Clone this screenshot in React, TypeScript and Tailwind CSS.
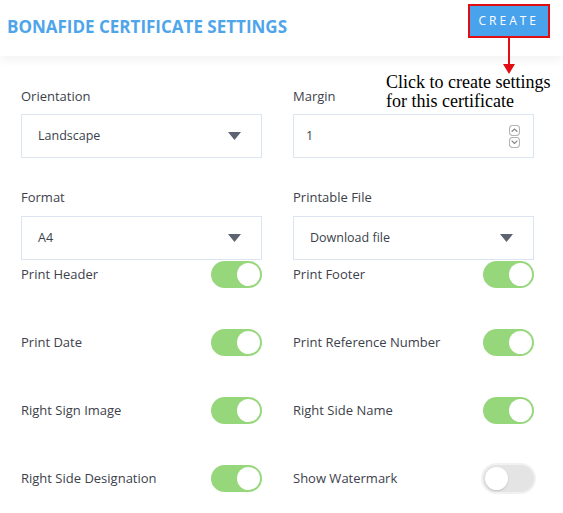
import { useState } from "react"

const font = { fontFamily: '"Open Sans", "Liberation Sans", sans-serif' }

function Caret() {
  return (
    <svg width="13" height="8" viewBox="0 0 13 8" className="text-[#5d6370]">
      <path d="M0 0h13L6.5 8z" fill="currentColor" />
    </svg>
  )
}

function Spinner() {
  return (
    <div className="flex flex-col gap-[1px]">
      {["M3 6.5l2.5-2.5 2.5 2.5", "M3 4l2.5 2.5 2.5-2.5"].map((d) => (
        <svg key={d} width="11" height="11" viewBox="0 0 11 11" fill="none" stroke="#8a8a8a" strokeWidth="1.1">
          <rect x="0.5" y="0.5" width="10" height="10" rx="3" stroke="#b5b5b5" />
          <path d={d} strokeLinecap="round" strokeLinejoin="round" />
        </svg>
      ))}
    </div>
  )
}

function SelectBox({ value }: { value: string }) {
  return (
    <div className="h-[44px] border border-[#dce4f2] flex items-center justify-between pl-4 pr-5 text-[12.5px] text-[#3a3f4b]">
      <span>{value}</span>
      <Caret />
    </div>
  )
}

function Switch({ on: initial }: { on: boolean }) {
  const [on, setOn] = useState(initial)
  return (
    <button
      onClick={() => setOn(!on)}
      className={`w-[51px] h-[27px] rounded-full p-[2px] flex ${
        on ? "bg-[#97d77c] justify-end" : "bg-[#e4e4e4] justify-start shadow-[0_0_0_2px_#f1f1f1]"
      }`}
    >
      <span className={`w-[23px] h-[23px] rounded-full bg-white ${on ? "" : "shadow-[0_1px_2px_rgba(0,0,0,0.15)]"}`} />
    </button>
  )
}

function ToggleRow({ label, on }: { label: string; on: boolean }) {
  return (
    <div className="flex items-center justify-between h-[27px]">
      <span className="text-[13px] text-[#3d414c]">{label}</span>
      <Switch on={on} />
    </div>
  )
}

export default function App() {
  const toggles: [string, boolean][] = [
    ["Print Header", true],
    ["Print Footer", true],
    ["Print Date", true],
    ["Print Reference Number", true],
    ["Right Sign Image", true],
    ["Right Side Name", true],
    ["Right Side Designation", true],
    ["Show Watermark", false],
  ]

  return (
    <div className="relative w-[563px] h-[513px] bg-white overflow-hidden" style={font}>
      <header className="h-14 flex items-center justify-between pl-[7px] pr-[13px] shadow-[0_4px_10px_rgba(0,0,0,0.05)]">
        <h1 className="text-[17px] font-bold text-[#4ea5ea] mt-[-3px]">BONAFIDE CERTIFICATE SETTINGS</h1>
        <button className="mt-[-14px] h-[34px] px-[9px] bg-[#48a2ec] border-2 border-[#e10d12] text-white text-[12px] tracking-[3px]">
          CREATE
        </button>
      </header>

      {/* annotation */}
      <div className="absolute left-[508px] top-[38px] w-[2px] h-[28px] bg-[#e10d12]" />
      <div className="absolute left-[503px] top-[64px] w-0 h-0 border-l-[6px] border-r-[6px] border-t-[10px] border-l-transparent border-r-transparent border-t-[#e10d12]" />
      <div
        className="absolute left-[386px] top-[73px] text-[18px] leading-[19px] text-black"
        style={{ fontFamily: '"Liberation Serif", serif' }}
      >
        Click to create settings
        <br />
        for this certificate
      </div>

      <main className="pl-[21px] pt-[32px] grid grid-cols-[241px_241px] gap-x-[31px]">
        <div>
          <label className="block text-[13px] text-[#3d414c] leading-4 mb-[10px]">Orientation</label>
          <SelectBox value="Landscape" />
        </div>
        <div>
          <label className="block text-[13px] text-[#3d414c] leading-4 mb-[10px]">Margin</label>
          <div className="h-[44px] border border-[#dce4f2] flex items-center justify-between pl-[12px] pr-[13px] text-[12.5px] text-[#3a3f4b]">
            <span>1</span>
            <Spinner />
          </div>
        </div>
        <div className="mt-[31px]">
          <label className="block text-[13px] text-[#3d414c] leading-4 mb-[11px]">Format</label>
          <SelectBox value="A4" />
        </div>
        <div className="mt-[31px]">
          <label className="block text-[13px] text-[#3d414c] leading-4 mb-[11px]">Printable File</label>
          <SelectBox value="Download file" />
        </div>
        <div className="col-span-2 grid grid-cols-[241px_241px] gap-x-[31px] gap-y-[41px] mt-[1px]">
          {toggles.map(([label, on]) => (
            <ToggleRow key={label} label={label} on={on} />
          ))}
        </div>
      </main>
    </div>
  )
}
